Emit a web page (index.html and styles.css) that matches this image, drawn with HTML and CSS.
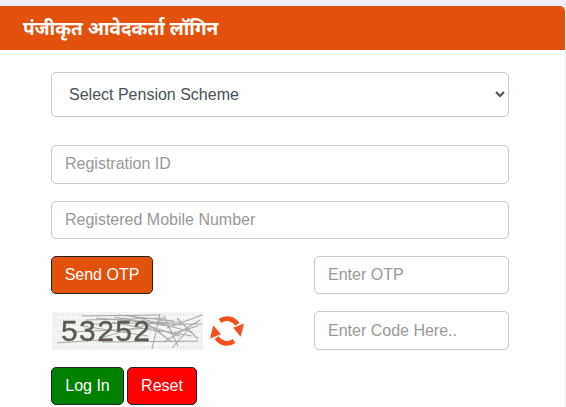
FILE: index.html
```html
<!DOCTYPE html>
<html lang="hi">
<head>
<meta charset="utf-8">
<title>पंजीकृत आवेदकर्ता लॉगिन</title>
<link rel="stylesheet" href="styles.css">
</head>
<body>
<main class="card">
  <h1 class="card-title">पंजीकृत आवेदकर्ता लॉगिन</h1>
  <form class="form">
    <select class="control select">
      <option>Select Pension Scheme</option>
    </select>
    <input class="control" type="text" placeholder="Registration ID">
    <input class="control" type="text" placeholder="Registered Mobile Number">
    <div class="split">
      <div class="left"><button class="btn btn-otp" type="button">Send OTP</button></div>
      <input class="control" type="text" placeholder="Enter OTP">
    </div>
    <div class="split">
      <div class="left captcha-row">
        <div class="captcha">
          <svg class="captcha-noise" viewBox="0 0 151 38" width="151" height="38" aria-hidden="true">
            <g stroke="#e2e2e0" stroke-width="2" stroke-dasharray="1 2" fill="none">
              <path d="M2 3 H150 M2 8 H150 M2 13 H150 M2 19 H150 M2 25 H150 M2 30 H150 M2 35 H150"/>
            </g>
            <g stroke="#a8a8a6" stroke-width="1.100" fill="none">
              <path d="M30 4 L108 3 M34 8 L112 6 M40 12 L128 10 M62 5 L116 14 M75 3 L140 20 M20 20 L100 16 M50 30 L146 29 M5 31 L60 27"/>
              <path d="M108 2 L100 37 M112 4 L126 34 M115 16 L150 3 M118 22 L146 14 M112 30 L148 8 M104 18 L140 24 M120 12 L150 12 M125 6 L146 27"/>
              <path d="M72 6 L128 24 M90 8 L120 30 M60 10 L110 20 M120 36 L136 18 M44 6 L130 13 M66 3 L122 9 M30 14 L96 24 M48 26 L112 8"/>
            </g>
          </svg>
          <span class="captcha-text">53252</span>
        </div>
        <svg class="refresh" viewBox="0 0 36 36" width="34" height="34" aria-hidden="true">
          <g fill="none" stroke="#f4511e" stroke-width="5">
            <path d="M10.500 7.400 A13 13 0 0 1 29 11"/>
            <path d="M25.500 28.600 A13 13 0 0 1 7 25"/>
          </g>
          <path fill="#f4511e" d="M36 10 L32.500 24 L24.500 14.500 Z"/>
          <path fill="#f4511e" d="M0 26 L3.500 12 L11.500 21.500 Z"/>
        </svg>
      </div>
      <input class="control" type="text" placeholder="Enter Code Here..">
    </div>
    <div class="actions">
      <button class="btn btn-login" type="button">Log In</button>
      <button class="btn btn-reset" type="button">Reset</button>
    </div>
  </form>
</main>
</body>
</html>
```
FILE: styles.css
```css
* { box-sizing: border-box; }
html, body { margin: 0; height: 407px; overflow: hidden; }
body {
  background: #eef0f5;
  padding-top: 6px;
  font-family: "Liberation Sans", Arial, sans-serif;
}
.card {
  width: 565px;
  height: 401px;
  background: #fff;
  border-top-right-radius: 5px;
  overflow: hidden;
}
.card-title {
  margin: 0;
  height: 44px;
  background: #e2520c;
  color: #fff;
  padding-left: 23px;
  font: 700 19px/44px "Noto Sans", "Noto Sans Devanagari", "Liberation Sans", sans-serif;
}
.form {
  display: flex;
  flex-direction: column;
  padding: 22px 56px 0 51px;
}
.control {
  display: block;
  width: 100%;
  height: 38.4px;
  border: 1px solid #c8c8c8;
  border-radius: 5px;
  background: #fff;
  padding: 0 13px;
  font: 16px "Liberation Sans", Arial, sans-serif;
  color: #495057;
  margin-bottom: 17px;
}
.control::placeholder { color: #999; opacity: 1; }
.select {
  height: 45px;
  margin-bottom: 28.2px;
}
.split {
  display: grid;
  grid-template-columns: 263px 195px;
}
.left { display: flex; align-items: flex-start; }
.btn {
  height: 38.4px;
  border: 1px solid #222;
  border-radius: 5px;
  color: #fff;
  font: 16px "Liberation Sans", Arial, sans-serif;
  padding: 0;
}
.btn-otp { width: 102px; background: #e2520c; }
.captcha-row { align-items: center; height: 38.4px; }
.captcha {
  position: relative;
  width: 151px;
  height: 38px;
  margin-left: 1px;
  background: #f5f5f3;
  overflow: hidden;
  filter: blur(0.4px);
}
.captcha-noise { position: absolute; left: 0; top: 0; }
.captcha-text {
  position: relative;
  display: block;
  padding-left: 9px;
  font: 30px/38px "Liberation Sans", sans-serif;
  letter-spacing: 1.4px;
  color: #5f5a55;
  -webkit-text-stroke: 0.4px #5f5a55;
}
.refresh { margin-left: 7px; }
.actions { display: flex; gap: 3px; }
.btn-login { width: 73px; background: #008000; }
.btn-reset { width: 70px; background: #f00; }
```
